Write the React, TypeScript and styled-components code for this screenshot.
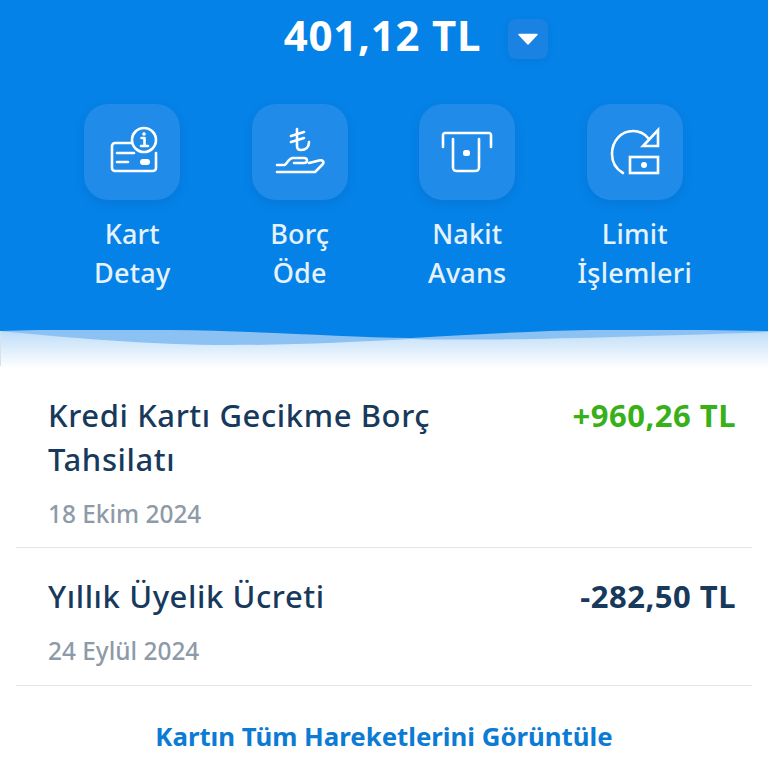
import React from "react";
import styled, { createGlobalStyle } from "styled-components";

const Global = createGlobalStyle`
  html, body { margin: 0; padding: 0; background: #fff; }
  body { font-family: "Noto Sans", "Open Sans", sans-serif; }
`;
const Page = styled.div`
  width: 768px; height: 768px; overflow: hidden; background: #fff;
  display: flex; flex-direction: column;
`;
const Hero = styled.header`
  height: 330px; background: #0582e7; color: #fff;
  display: flex; flex-direction: column; align-items: center;
  flex: none;
`;
const AmountRow = styled.div`
  height: 72px; display: flex; align-items: center; gap: 27px;
  padding-left: 64px;
`;
const Amount = styled.div`
  font-size: 42px; font-weight: 700; line-height: 72px; letter-spacing: 0.75px;
  margin-top: -2px;
`;
const Toggle = styled.button`
  width: 40px; height: 40px; border: 0; border-radius: 8px; padding: 0; margin-top: 6px;
  background: #1a82e2; display: flex; align-items: center; justify-content: center;
  box-shadow: 0 2px 6px rgba(0, 60, 130, 0.12);
`;
const Actions = styled.nav`
  margin-top: 32px; margin-left: -1px; display: grid; grid-template-columns: repeat(4, 167.5px);
`;
const Action = styled.div`
  display: flex; flex-direction: column; align-items: center;
`;
const Tile = styled.div`
  width: 96px; height: 96px; border-radius: 24px; background: #218bea;
  line-height: 0;
  box-shadow: 0 4px 10px rgba(0, 70, 150, 0.16);
`;
const Label = styled.div`
  margin-top: 14px; font-size: 27px; line-height: 39px; text-align: center; color: #e6f2fd;
  font-weight: 500; letter-spacing: 0.2px;
`;
const WaveBox = styled.div`
  height: 38px; flex: none; line-height: 0;
`;
const List = styled.section`
  padding: 0 16px; flex: 1; display: flex; flex-direction: column;
`;
const Row = styled.article<{ $h: number; $top: number }>`
  height: ${(p) => p.$h}px; box-sizing: border-box; padding: ${(p) => p.$top}px 16px 0 32px;
  border-bottom: 1px solid #e3e6e9;
  display: flex; flex-direction: column;
`;
const Top = styled.div`
  display: flex; justify-content: space-between; align-items: flex-start;
`;
const Title = styled.div`
  font-size: 31px; line-height: 44px; color: #17395c; width: 420px; font-weight: 500; letter-spacing: 0.6px;
`;
const Value = styled.div<{ $pos?: boolean }>`
  font-size: 31px; line-height: 44px; font-weight: 700; letter-spacing: 0.5px;
  color: ${(p) => (p.$pos ? "#38b018" : "#17395c")};
`;
const DateText = styled.div`
  font-size: 24.4px; line-height: 34px; margin-top: 16px; color: #8d9aa7; font-weight: 500;
`;
const LinkText = styled.a`
  margin-top: 31px; text-align: center; font-size: 25.8px; line-height: 38px;
  font-weight: 700; color: #0b7bd4;
`;

const stroke = { fill: "none", stroke: "#fff", strokeWidth: 2.6, strokeLinecap: "round", strokeLinejoin: "round" } as const;

const CardInfo = () => (
  <svg width="96" height="96" viewBox="0 0 96 96">
    <path {...stroke} d="M47 39H31a3 3 0 0 0-3 3V64a3 3 0 0 0 3 3H69a3 3 0 0 0 3-3V49" />
    <circle {...stroke} cx="60" cy="36" r="12" />
    <path {...stroke} d="M57.500 34H60.500V42M57 42H64" />
    <circle cx="60" cy="30" r="1.800" fill="#fff" />
    <path {...stroke} d="M33 49H50M33 58H44" />
    <rect x="56" y="55" width="10" height="6" rx="3" fill="#fff" />
  </svg>
);
const HandLira = () => (
  <svg width="96" height="96" viewBox="0 0 96 96">
    <path {...stroke} d="M45 25V42C45 45 47 46 49 46 54 46 57 43 57 38M39 32L52 28M39 38L52 34" />
    <path {...stroke} d="M25 61H32C35 61 36 54 41 54H52C56 54 56 59 52 59H42" />
    <path {...stroke} d="M57 59L67 56.500C71 55.500 72.500 58 70.500 60.500L63 68H25" />
  </svg>
);
const Atm = () => (
  <svg width="96" height="96" viewBox="0 0 96 96">
    <path {...stroke} d="M24 43V31C24 30 25 29 26 29H70C71 29 72 30 72 31V43" />
    <path {...stroke} d="M34 35V63C34 66 35 67 38 67H56C59 67 60 66 60 63V35" />
    <rect x="44" y="46" width="7" height="6" rx="2.500" fill="#fff" />
  </svg>
);
const LimitIcon = () => (
  <svg width="96" height="96" viewBox="0 0 96 96">
    <path {...stroke} d="M36 69C29 65 25 58 25 50 25 37 34 27 46 27 52 27 57 29 61 34" />
    <path {...stroke} strokeLinejoin="miter" d="M71 26V42H56Z" />
    <rect {...stroke} strokeLinejoin="miter" x="43" y="53" width="28" height="16" />
    <circle cx="57" cy="61" r="3" fill="#fff" />
  </svg>
);

const Wave = () => (
  <svg width="768" height="38" viewBox="0 0 768 38" preserveAspectRatio="none">
    <defs>
      <linearGradient id="fade" x1="0" y1="0" x2="0" y2="1">
        <stop offset="0" stopColor="#bcdcf8" />
        <stop offset="1" stopColor="#ffffff" />
      </linearGradient>
    </defs>
    <rect width="768" height="38" fill="url(#fade)" />
    <rect width="1" height="36" fill="#d8e2ea" />
    <path fill="#8cc2f3" d="M0 1C60 7 150 15 230 15 300 15 350 12 411 9 470 11 600 8 768 2V0H0Z" />
    <path fill="#0582e7" d="M0 1C60 -1 120 -1 170 0 260 1 340 7 411 8 470 5 530 1 590 0 650 -1 710 0 768 1V-1H0Z" />
  </svg>
);

const actions = [
  { icon: <CardInfo />, a: "Kart", b: "Detay" },
  { icon: <HandLira />, a: "Borç", b: "Öde" },
  { icon: <Atm />, a: "Nakit", b: "Avans" },
  { icon: <LimitIcon />, a: "Limit", b: "İşlemleri" },
];

export default function App() {
  return (
    <Page>
      <Global />
      <Hero>
        <AmountRow>
          <Amount>401,12 TL</Amount>
          <Toggle aria-label="Aç">
            <svg width="20" height="12" viewBox="0 0 20 12">
              <path d="M1 1.500h18L10 11z" fill="#fff" stroke="#fff" strokeWidth="1.500" strokeLinejoin="round" />
            </svg>
          </Toggle>
        </AmountRow>
        <Actions>
          {actions.map((x) => (
            <Action key={x.a}>
              <Tile>{x.icon}</Tile>
              <Label>
                {x.a}
                <br />
                {x.b}
              </Label>
            </Action>
          ))}
        </Actions>
      </Hero>
      <WaveBox>
        <Wave />
      </WaveBox>
      <List>
        <Row $h={180} $top={25}>
          <Top>
            <Title>Kredi Kartı Gecikme Borç Tahsilatı</Title>
            <Value $pos>+960,26 TL</Value>
          </Top>
          <DateText>18 Ekim 2024</DateText>
        </Row>
        <Row $h={138} $top={26}>
          <Top>
            <Title>Yıllık Üyelik Ücreti</Title>
            <Value>-282,50 TL</Value>
          </Top>
          <DateText>24 Eylül 2024</DateText>
        </Row>
        <LinkText>Kartın Tüm Hareketlerini Görüntüle</LinkText>
      </List>
    </Page>
  );
}
